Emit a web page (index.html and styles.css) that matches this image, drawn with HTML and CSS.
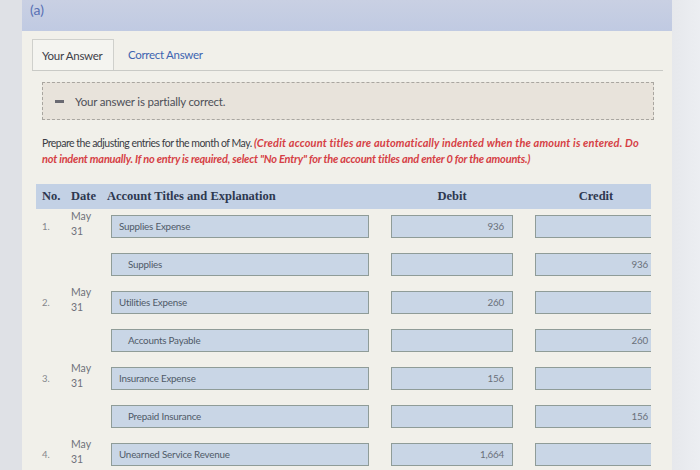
FILE: index.html
```html
<!DOCTYPE html>
<html>
<head>
<meta charset="utf-8">
<link rel="stylesheet" href="styles.css">
</head>
<body>
<div class="page">
  <div class="left-strip"></div>
  <div class="main">
    <div class="part-header">(a)</div>
    <div class="content">
      <div class="tabs">
        <div class="tab active">Your Answer</div>
        <div class="tab link">Correct Answer</div>
      </div>
      <div class="alert">
        <span class="dash"></span>
        <span class="alert-text">Your answer is partially correct.</span>
      </div>
      <p class="instructions">Prepare the adjusting entries for the month of May. <em class="note">(Credit account titles are automatically indented when the amount is entered. Do</em><br><em class="note tight">not indent manually. If no entry is required, select "No Entry" for the account titles and enter 0 for the amounts.)</em></p>
      <div class="table">
        <div class="thead">
          <div class="th no">No.</div>
          <div class="th date">Date</div>
          <div class="th acct">Account Titles and Explanation</div>
          <div class="th amt">Debit</div>
          <div class="th amt">Credit</div>
        </div>

        <div class="row">
          <div class="no">1.</div>
          <div class="date">May<br>31</div>
          <div class="cell"><div class="field acct-field">Supplies Expense</div></div>
          <div class="cell"><div class="field num">936</div></div>
          <div class="cell"><div class="field num"></div></div>
        </div>
        <div class="row">
          <div class="no"></div>
          <div class="date"></div>
          <div class="cell"><div class="field acct-field indent">Supplies</div></div>
          <div class="cell"><div class="field num"></div></div>
          <div class="cell"><div class="field num">936</div></div>
        </div>

        <div class="row">
          <div class="no">2.</div>
          <div class="date">May<br>31</div>
          <div class="cell"><div class="field acct-field">Utilities Expense</div></div>
          <div class="cell"><div class="field num">260</div></div>
          <div class="cell"><div class="field num"></div></div>
        </div>
        <div class="row">
          <div class="no"></div>
          <div class="date"></div>
          <div class="cell"><div class="field acct-field indent">Accounts Payable</div></div>
          <div class="cell"><div class="field num"></div></div>
          <div class="cell"><div class="field num">260</div></div>
        </div>

        <div class="row">
          <div class="no">3.</div>
          <div class="date">May<br>31</div>
          <div class="cell"><div class="field acct-field">Insurance Expense</div></div>
          <div class="cell"><div class="field num">156</div></div>
          <div class="cell"><div class="field num"></div></div>
        </div>
        <div class="row">
          <div class="no"></div>
          <div class="date"></div>
          <div class="cell"><div class="field acct-field indent">Prepaid Insurance</div></div>
          <div class="cell"><div class="field num"></div></div>
          <div class="cell"><div class="field num">156</div></div>
        </div>

        <div class="row">
          <div class="no">4.</div>
          <div class="date">May<br>31</div>
          <div class="cell"><div class="field acct-field">Unearned Service Revenue</div></div>
          <div class="cell"><div class="field num">1,664</div></div>
          <div class="cell"><div class="field num"></div></div>
        </div>
      </div>
    </div>
  </div>
  <div class="right-strip"></div>
</div>
</body>
</html>
```
FILE: styles.css
```css
* { box-sizing: border-box; }
html, body {
  margin: 0;
  padding: 0;
  width: 700px;
  height: 470px;
  overflow: hidden;
  background: #e4e6ea;
  font-family: Lato, "Open Sans", sans-serif;
}
.page {
  display: flex;
  width: 700px;
  height: 470px;
}
.left-strip {
  width: 22px;
  flex: none;
  background: #dfe1e6;
}
.main {
  width: 650px;
  flex: none;
  display: flex;
  flex-direction: column;
  background: #f1f0ea;
}
.right-strip {
  flex: 1;
  background: linear-gradient(to right, #e6e8ec, #eceef2);
}
.part-header {
  flex: none;
  height: 31px;
  padding: 3px 0 0 8px;
  background: linear-gradient(to bottom, #c9d0e3, #c0cae2);
  color: #5870b4;
  font-size: 14px;
  line-height: 14px;
  margin-right: -3px;
}
.content {
  flex: 1;
  padding: 9px 0 0 10px;
}
.tabs {
  display: flex;
  align-items: flex-end;
  height: 31px;
  border-bottom: 1px solid #c9cac6;
  width: 631px;
}
.tab {
  height: 31px;
  font-size: 11.5px;
  letter-spacing: -0.3px;
  line-height: 31px;
  padding: 0 9px;
}
.tab.active {
  width: 82px;
  border: 1px solid #cfd0cc;
  border-bottom: none;
  background: #f4f4f0;
  color: #3d4048;
}
.tab.link {
  color: #3d64b0;
  padding-left: 14px;
}
.alert {
  margin: 11px 0 0 10px;
  width: 612px;
  height: 38px;
  border: 1px dashed #a9a6a0;
  background: #e8e3db;
  display: flex;
  align-items: center;
  padding-left: 12px;
}
.dash {
  width: 9px;
  height: 3px;
  background: #6a6a72;
  margin-right: 11px;
}
.alert-text {
  font-size: 11.5px;
  letter-spacing: -0.2px;
  color: #4e5058;
}
.instructions {
  margin: 15px 0 0 10px;
  width: 610px;
  font-size: 10.5px;
  line-height: 15px;
  letter-spacing: -0.5px;
  color: #3a3c44;
  white-space: nowrap;
}
.note {
  color: #d63f45;
  font-weight: bold;
  font-style: italic;
  font-size: 11px;
  letter-spacing: 0.15px;
}
.note.tight {
  letter-spacing: -0.22px;
}
.table {
  margin: 17px 0 0 4px;
  width: 615px;
  overflow: hidden;
}
.thead, .row {
  display: grid;
  grid-template-columns: 35px 40px 280px 144px 116px;
}
.thead {
  height: 25px;
  background: #c3d1e5;
  align-items: center;
  font-family: "Liberation Serif", "DejaVu Serif", serif;
  font-weight: bold;
  font-size: 12.5px;
  color: #2e3850;
}
.th.no { padding-left: 6px; }
.th.acct { margin-left: -4px; }
.th.amt { text-align: center; width: 122px; }
.row {
  height: 38px;
  padding-top: 6px;
}
.row .no {
  padding-left: 6px;
  font-size: 9.5px;
  color: #85878c;
  line-height: 23px;
}
.row .date {
  font-size: 10.5px;
  color: #6f717a;
  line-height: 15px;
  margin-top: -6px;
}
.field {
  height: 23px;
  background: #c9d6e6;
  border: 1px solid #8f9c98;
  font-size: 9.8px;
  line-height: 21px;
  color: #4f5a68;
  letter-spacing: -0.2px;
}
.acct-field {
  width: 258px;
  padding-left: 7px;
}
.acct-field.indent { padding-left: 16px; }
.num {
  width: 122px;
  text-align: right;
  padding-right: 8px;
  color: #6a707a;
}
```
